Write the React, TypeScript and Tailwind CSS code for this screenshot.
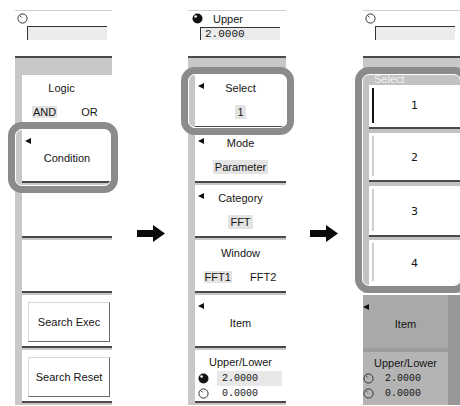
import React from "react";

function Knob({ filled = false }: { filled?: boolean }) {
  return filled ? (
    <svg width="11" height="11" viewBox="0 0 11 11" className="block shrink-0">
      <circle cx="5.5" cy="5.5" r="5" fill="#111" />
      <circle cx="3.6" cy="3.5" r="1.3" fill="#fff" />
    </svg>
  ) : (
    <svg width="11" height="11" viewBox="0 0 11 11" className="block shrink-0">
      <circle cx="5.5" cy="5.5" r="4.6" fill="none" stroke="#333" strokeWidth="1" />
      <path d="M2.6 2.4 L4.6 4.4" stroke="#333" strokeWidth="1" />
    </svg>
  );
}

function Tri({ pos = "left-[3px] top-[8px]" }: { pos?: string }) {
  return (
    <svg width="6" height="6" viewBox="0 0 6 6" className={`absolute ${pos}`}>
      <polygon points="6,0 6,6 0,3" fill="#111" />
    </svg>
  );
}

function Arrow() {
  return (
    <svg width="28" height="17" viewBox="0 0 28 17" className="block">
      <polygon points="0,5 16,5 16,0 28,8.5 16,17 16,12 0,12" fill="#0a0a0a" />
    </svg>
  );
}

function Key({ children, className = "bg-white" }: { children?: React.ReactNode; className?: string }) {
  return <div className={`relative h-[53px] shrink-0 border-b-2 border-[#4a4a4a] ${className}`}>{children}</div>;
}

function TwoRow({
  title,
  arrow = false,
  opts,
  sel = 0,
  titleClass = "",
}: {
  title: string;
  arrow?: boolean;
  opts: string[];
  sel?: number;
  titleClass?: string;
}) {
  return (
    <Key>
      {arrow && <Tri />}
      <div className={`pt-[7px] text-center leading-[13px] ${titleClass}`}>{title}</div>
      {opts.length === 1 ? (
        <div className="mt-[10px] flex justify-center leading-[14px]">
          <span className="bg-[#e3e3e3] px-[2px]">{opts[0]}</span>
        </div>
      ) : (
        <div className="mt-[10px] grid grid-cols-2 leading-[14px]">
          {opts.map((o, i) => (
            <div key={o} className="text-center">
              <span className={i === sel ? "bg-[#e3e3e3] px-[1px]" : "px-[1px]"}>{o}</span>
            </div>
          ))}
        </div>
      )}
    </Key>
  );
}

function LabelKey({ label, arrow = false }: { label: string; arrow?: boolean }) {
  return (
    <Key>
      {arrow && <Tri />}
      <div className="flex h-full items-center justify-center pt-[6px]">{label}</div>
    </Key>
  );
}

function BtnKey({ label }: { label: string }) {
  return (
    <Key>
      <div className="ml-[6px] mt-[7px] flex h-[40px] w-[82px] items-center justify-center border border-[#d6d6d6] border-b-[#6a6a6a] border-r-[#6a6a6a] bg-white">
        {label}
      </div>
    </Key>
  );
}

function Frame({ pos }: { pos: string }) {
  return (
    <div className={`pointer-events-none absolute rounded-[14px] border-[7px] border-[#8b8b8b] ${pos}`}>
      <div className="h-full w-full rounded-[7px] border border-white" />
    </div>
  );
}

function TopEmpty() {
  return (
    <>
      <div className="h-[46px] border-t border-[#cfcfcf] bg-white pl-[2px] pt-[2px]">
        <Knob />
        <div className="ml-[10px] mt-[2px] h-[14px] w-[80px] border-l border-t border-[#333] bg-[#ebebeb]" />
      </div>
      <div className="h-[2px] bg-[#4a4a4a]" />
    </>
  );
}

function Panel1() {
  return (
    <div className="relative w-[97px] shrink-0">
      <TopEmpty />
      <div className="flex flex-col gap-[2px] bg-[#c8c8c8] pb-[2px] pl-[7px] pt-[17px]">
        <TwoRow title="Logic" opts={["AND", "OR"]} sel={0} titleClass="pr-[11px]" />
        <LabelKey label="Condition" arrow />
        <Key />
        <Key />
        <BtnKey label="Search Exec" />
        <BtnKey label="Search Reset" />
      </div>
      <Frame pos="left-[-7px] top-[112px] h-[71px] w-[110px]" />
    </div>
  );
}

function Panel2() {
  return (
    <div className="relative w-[98px] shrink-0">
      <div className="h-[46px] border-t border-[#cfcfcf] bg-white pl-[4px] pt-[2px]">
        <div className="flex h-[13px] items-start">
          <Knob filled />
          <span className="ml-[10px] leading-[13px]">Upper</span>
        </div>
        <div className="ml-[8px] mt-[1px] h-[13px] w-[80px] border-l border-t border-[#333] bg-[#ebebeb] pl-[4px] font-['Liberation_Mono',monospace] text-[11px] leading-[12px]">
          2.0000
        </div>
      </div>
      <div className="h-[2px] bg-[#4a4a4a]" />
      <div className="flex flex-col gap-[2px] bg-[#c8c8c8] pb-[2px] pl-[7px] pt-[17px]">
        <TwoRow title="Select" arrow opts={["1"]} />
        <TwoRow title="Mode" arrow opts={["Parameter"]} />
        <TwoRow title="Category" arrow opts={["FFT"]} />
        <TwoRow title="Window" opts={["FFT1", "FFT2"]} sel={0} />
        <LabelKey label="Item" arrow />
        <Key>
          <div className="pt-[6px] text-center leading-[13px]">Upper/Lower</div>
          <div className="mt-[2px] flex h-[15px] items-center pl-[3px]">
            <Knob filled />
            <div className="ml-[8px] h-[15px] w-[65px] bg-[#e8e8e8] pl-[5px] font-['Liberation_Mono',monospace] text-[10px] leading-[15px]">
              2.0000
            </div>
          </div>
          <div className="flex h-[15px] items-center pl-[3px]">
            <Knob />
            <div className="ml-[8px] h-[15px] w-[65px] pl-[5px] font-['Liberation_Mono',monospace] text-[10px] leading-[15px]">
              0.0000
            </div>
          </div>
        </Key>
      </div>
      <Frame pos="left-[-7px] top-[57px] h-[68px] w-[113px]" />
    </div>
  );
}

function PopBtn({ n, h, sel = false, last = false, pt = "pt-[0px]" }: { n: string; h: string; sel?: boolean; last?: boolean; pt?: string }) {
  return (
    <div className={`relative shrink-0 bg-white ${h} ${last ? "flex-1" : "border-b-2 border-[#4a4a4a]"}`}>
      <div className={`absolute bottom-[4px] left-[3px] top-[3px] w-[2px] ${sel ? "bg-[#111]" : "bg-[#cfcfcf]"}`} />
      <div className={`flex h-full items-center justify-center font-['DejaVu_Sans',sans-serif] text-[11px] ${pt}`}>{n}</div>
    </div>
  );
}

function Panel3() {
  return (
    <div className="relative w-[97px] shrink-0">
      <TopEmpty />
      <div className="h-[235px] bg-[#c8c8c8]" />
      <div className="h-[2px] bg-white" />
      <div className="flex h-[110px]">
        <div className="flex w-[85px] flex-col">
          <div className="relative h-[53px] bg-[#a9a9a9]">
            <Tri pos="left-[0px] top-[9px]" />
            <div className="flex h-full items-center justify-center pt-[6px]">Item</div>
          </div>
          <div className="h-[4px] bg-[#9c9c9c]" />
          <div className="flex-1 bg-[#b4b4b4]">
            <div className="pt-[5px] text-center leading-[13px]">Upper/Lower</div>
            <div className="mt-[1px] flex h-[15px] items-center">
              <Knob />
              <span className="ml-[11px] font-['Liberation_Mono',monospace] text-[10px] leading-[15px]">2.0000</span>
            </div>
            <div className="flex h-[15px] items-center">
              <Knob />
              <span className="ml-[11px] font-['Liberation_Mono',monospace] text-[10px] leading-[15px]">0.0000</span>
            </div>
          </div>
        </div>
        <div className="flex-1 bg-[#989898]" />
      </div>
      <div className="absolute left-[-8px] top-[57px] h-[226px] w-[113px] overflow-hidden rounded-[14px] border-[7px] border-[#8b8b8b]">
        <div className="flex h-full flex-col overflow-hidden rounded-[7px] border border-white bg-[#c2c2c2] pl-[6px]">
          <div className="h-[10px] shrink-0 overflow-hidden pl-[5px]">
            <div className="-mt-[2px] leading-[12px] text-[#f2f2f2]">Select</div>
          </div>
          <PopBtn n="1" h="h-[44px]" sel />
          <div className="h-[4px] shrink-0" />
          <PopBtn n="2" h="h-[49px]" pt="pt-[4px]" />
          <div className="h-[4px] shrink-0" />
          <PopBtn n="3" h="h-[51px]" pt="pt-[4px]" />
          <div className="h-[3px] shrink-0" />
          <PopBtn n="4" h="h-[44px]" last pt="pt-[4px]" />
        </div>
      </div>
    </div>
  );
}

export default function App() {
  return (
    <div className="relative flex h-[406px] w-[460px] overflow-hidden bg-white pl-[15px] pt-[10px] font-['Liberation_Sans',Arial,sans-serif] text-[11px] text-[#151515]">
      <Panel1 />
      <div className="w-[76px] shrink-0 pl-[25px] pt-[215px]">
        <Arrow />
      </div>
      <Panel2 />
      <div className="w-[77px] shrink-0 pl-[24px] pt-[215px]">
        <Arrow />
      </div>
      <Panel3 />
    </div>
  );
}
